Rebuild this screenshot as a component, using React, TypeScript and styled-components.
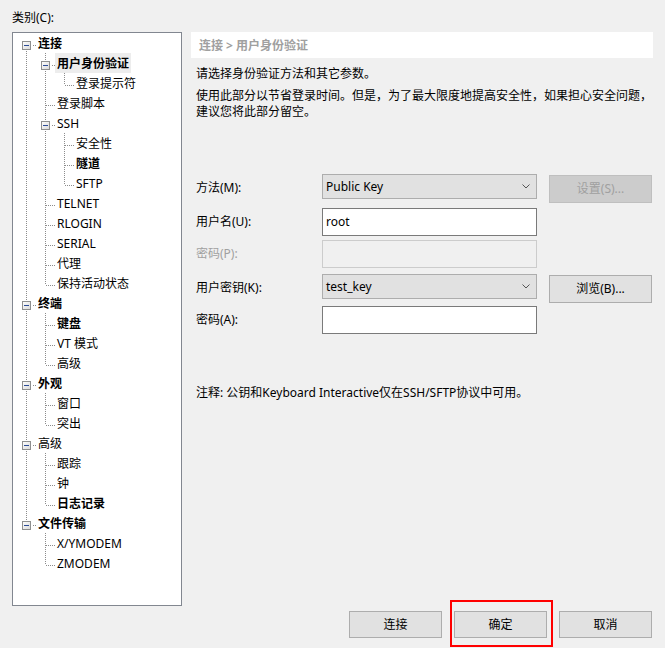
import React from 'react';
import styled, { createGlobalStyle } from 'styled-components';

const GlobalStyle = createGlobalStyle`
  * { box-sizing: border-box; }
  html, body { margin: 0; padding: 0; background: #f0f0f0; }
  body {
    font-family: "Noto Sans", "Noto Sans CJK SC", sans-serif;
    font-size: 12px;
    color: #000;
  }
`;

type TreeNode = { label: string; bold?: boolean; selected?: boolean; children?: TreeNode[] };

const treeData: TreeNode[] = [
  {
    label: '连接', bold: true, children: [
      { label: '用户身份验证', bold: true, selected: true, children: [{ label: '登录提示符' }] },
      { label: '登录脚本' },
      { label: 'SSH', children: [{ label: '安全性' }, { label: '隧道', bold: true }, { label: 'SFTP' }] },
      { label: 'TELNET' },
      { label: 'RLOGIN' },
      { label: 'SERIAL' },
      { label: '代理' },
      { label: '保持活动状态' },
    ],
  },
  { label: '终端', bold: true, children: [{ label: '键盘', bold: true }, { label: 'VT 模式' }, { label: '高级' }] },
  { label: '外观', bold: true, children: [{ label: '窗口' }, { label: '突出' }] },
  { label: '高级', children: [{ label: '跟踪' }, { label: '钟' }, { label: '日志记录', bold: true }] },
  { label: '文件传输', bold: true, children: [{ label: 'X/YMODEM' }, { label: 'ZMODEM' }] },
];

type FlatRow = {
  node: TreeNode;
  guides: boolean[];
  top: boolean;
  bottom: boolean;
};

function flatten(nodes: TreeNode[], guides: boolean[], isRoot: boolean, out: FlatRow[]) {
  nodes.forEach((n, i) => {
    const last = i === nodes.length - 1;
    out.push({ node: n, guides, top: !(isRoot && i === 0), bottom: !last });
    if (n.children) flatten(n.children, [...guides, !last], false, out);
  });
  return out;
}

const rows = flatten(treeData, [], true, []);

const Page = styled.div`
  display: flex;
  height: 648px;
  padding: 8px 0 0 12px;
`;

const Side = styled.div`
  display: flex;
  flex-direction: column;
  width: 170px;
`;

const CatLabel = styled.div`
  line-height: 20px;
  height: 20px;
  margin-bottom: 4px;
`;

const TreeBox = styled.div`
  height: 574px;
  background: #fff;
  border: 1px solid #828790;
  padding: 0 0 0 4px;
`;

const TreeRow = styled.div`
  display: flex;
  height: 20px;
  align-items: stretch;
`;

const Cell = styled.svg`
  width: 19px;
  height: 20px;
  flex: none;
  display: block;
`;

const TreeLabel = styled.span<{ $bold?: boolean; $selected?: boolean }>`
  padding: 2px 2px 0;
  line-height: 18px;
  height: 20px;
  white-space: nowrap;
  font-weight: ${p => (p.$bold ? 700 : 400)};
  background: ${p => (p.$selected ? '#ededed' : 'transparent')};
`;

const DOT = '#8c8c8c';

const Guide: React.FC<{ on: boolean }> = ({ on }) => (
  <Cell viewBox="0 0 19 20">
    {on && <line x1="9.5" y1="0" x2="9.5" y2="20" stroke={DOT} strokeWidth="1" strokeDasharray="1 1" />}
  </Cell>
);

const Connector: React.FC<{ top: boolean; bottom: boolean; expander: boolean }> = ({ top, bottom, expander }) => (
  <Cell viewBox="0 0 19 20">
    <defs>
      <linearGradient id="exg" x1="0" y1="0" x2="1" y2="1">
        <stop offset="0" stopColor="#ffffff" />
        <stop offset="1" stopColor="#d8d8d8" />
      </linearGradient>
    </defs>
    {top && <line x1="9.5" y1="0" x2="9.5" y2="12" stroke={DOT} strokeWidth="1" strokeDasharray="1 1" />}
    {bottom && <line x1="9.5" y1="12" x2="9.5" y2="20" stroke={DOT} strokeWidth="1" strokeDasharray="1 1" />}
    <line x1={expander ? 16 : 10} y1="12.5" x2="19" y2="12.5" stroke={DOT} strokeWidth="1" strokeDasharray="1 1" />
    {expander && (
      <g>
        <rect x="5.5" y="8.5" width="8" height="8" fill="url(#exg)" stroke="#8e8f8f" strokeWidth="1" />
        <line x1="7" y1="12.5" x2="12" y2="12.5" stroke="#2c4c96" strokeWidth="1" />
      </g>
    )}
  </Cell>
);

const Main = styled.div`
  display: flex;
  flex-direction: column;
  width: 462px;
  margin-left: 9px;
  padding: 24px 0 10px 0;
`;

const Header = styled.div`
  height: 26px;
  line-height: 27px;
  background: #fff;
  padding-left: 8px;
  color: #a0a0a0;
  font-weight: 700;
`;

const Desc = styled.p<{ $gap: number }>`
  margin: ${p => p.$gap}px 0 0 0;
  padding-left: 5px;
  line-height: 16px;
`;

const Form = styled.div`
  display: grid;
  grid-template-columns: 114px 215px 103px;
  grid-template-rows: 34px 32px 34px 32px 28px;
  column-gap: 12px;
  padding-left: 5px;
  margin-top: 54px;
  align-items: start;
`;

const FieldLabel = styled.div<{ $disabled?: boolean; $h: number }>`
  height: ${p => p.$h}px;
  line-height: ${p => p.$h}px;
  color: ${p => (p.$disabled ? '#a0a0a0' : '#000')};
  white-space: nowrap;
`;

const Combo = styled.div`
  height: 25px;
  display: flex;
  align-items: center;
  justify-content: space-between;
  padding: 0 6px 0 3px;
  background: #e1e1e1;
  border: 1px solid #adadad;
  line-height: 23px;
`;

const TextBox = styled.div<{ $disabled?: boolean }>`
  height: 28px;
  line-height: 26px;
  padding: 0 3px;
  background: ${p => (p.$disabled ? '#f0f0f0' : '#fff')};
  border: 1px solid ${p => (p.$disabled ? '#cccccc' : '#7a7a7a')};
`;

const SideButton = styled.div<{ $disabled?: boolean }>`
  height: 28px;
  margin-top: 1px;
  line-height: 26px;
  text-align: center;
  background: ${p => (p.$disabled ? '#cccccc' : '#e1e1e1')};
  border: 1px solid ${p => (p.$disabled ? '#bfbfbf' : '#adadad')};
  color: ${p => (p.$disabled ? '#a0a0a0' : '#000')};
`;

const Empty = styled.div``;

const Note = styled.div`
  margin-top: 51px;
  padding-left: 5px;
  line-height: 16px;
`;

const ButtonBar = styled.div`
  margin-top: auto;
  display: flex;
  justify-content: flex-end;
  gap: 12px;
  padding-right: 1px;
`;

const Button = styled.div`
  width: 93px;
  height: 27px;
  line-height: 25px;
  text-align: center;
  background: #e1e1e1;
  border: 1px solid #adadad;
`;

const Highlight = styled.div`
  position: relative;
  &::after {
    content: '';
    position: absolute;
    top: -11px;
    left: -4px;
    right: -6px;
    bottom: -9px;
    border: 2px solid #ff0000;
    pointer-events: none;
  }
`;

const Chevron = () => (
  <svg width="8" height="5" viewBox="0 0 8 5">
    <polyline points="0.5,0.5 4,4 7.5,0.5" fill="none" stroke="#555" strokeWidth="1" />
  </svg>
);

export default function App() {
  return (
    <>
      <GlobalStyle />
      <Page>
        <Side>
          <CatLabel>类别(C):</CatLabel>
          <TreeBox>
            {rows.map((r, i) => (
              <TreeRow key={i}>
                {r.guides.map((g, j) => (
                  <Guide key={j} on={g} />
                ))}
                <Connector top={r.top} bottom={r.bottom} expander={!!r.node.children} />
                <TreeLabel $bold={r.node.bold} $selected={r.node.selected}>
                  {r.node.label}
                </TreeLabel>
              </TreeRow>
            ))}
          </TreeBox>
        </Side>
        <Main>
          <Header>连接 &gt; 用户身份验证</Header>
          <Desc $gap={8}>请选择身份验证方法和其它参数。</Desc>
          <Desc $gap={6}>
            使用此部分以节省登录时间。但是，为了最大限度地提高安全性，如果担心安全问题，
            <br />
            建议您将此部分留空。
          </Desc>
          <Form>
            <FieldLabel $h={27}>方法(M):</FieldLabel>
            <Combo>
              <span>Public Key</span>
              <Chevron />
            </Combo>
            <SideButton $disabled>设置(S)...</SideButton>

            <FieldLabel $h={28}>用户名(U):</FieldLabel>
            <TextBox>root</TextBox>
            <Empty />

            <FieldLabel $h={28} $disabled>密码(P):</FieldLabel>
            <TextBox $disabled />
            <Empty />

            <FieldLabel $h={27}>用户密钥(K):</FieldLabel>
            <Combo>
              <span>test_key</span>
              <Chevron />
            </Combo>
            <SideButton>浏览(B)...</SideButton>

            <FieldLabel $h={28}>密码(A):</FieldLabel>
            <TextBox />
            <Empty />
          </Form>
          <Note>注释: 公钥和Keyboard Interactive仅在SSH/SFTP协议中可用。</Note>
          <ButtonBar>
            <Button>连接</Button>
            <Highlight>
              <Button>确定</Button>
            </Highlight>
            <Button>取消</Button>
          </ButtonBar>
        </Main>
      </Page>
    </>
  );
}
